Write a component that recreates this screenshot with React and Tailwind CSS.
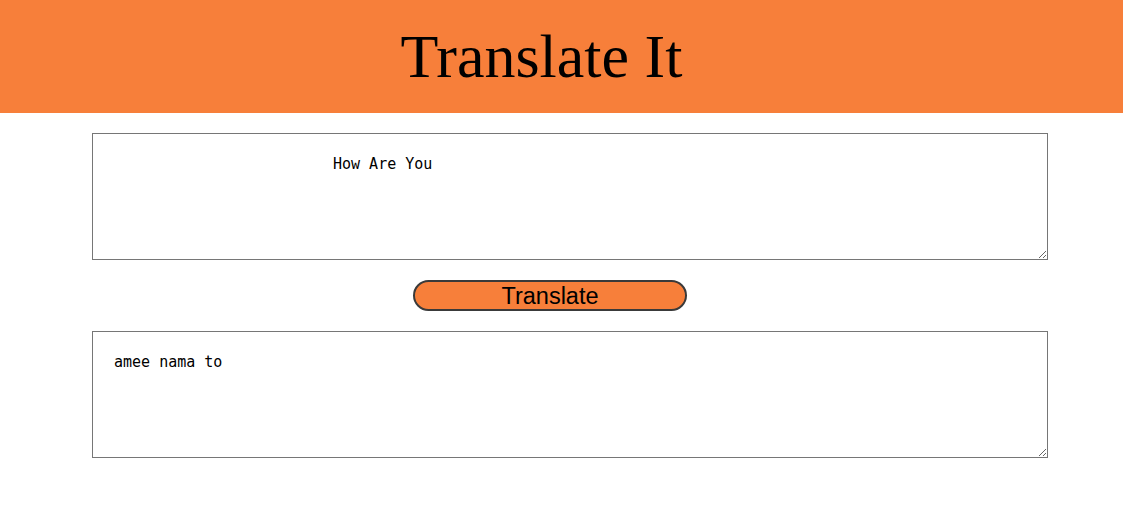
export default function App() {
  return (
    <div className="min-h-[507px] bg-white">
      {/* Header */}
      <div className="h-[113px] bg-[#f77f3a] flex items-center justify-center pr-[40px]">
        <h1 className="text-[62px] leading-none text-black font-['Liberation_Serif',serif] mt-[-2px]">Translate It</h1>
      </div>

      <div className="pt-[20px] pl-[92px] flex flex-col">
        <textarea
          readOnly
          defaultValue="How Are You"
          className="w-[956px] h-[127px] border border-[#767676] pt-[21px] pl-[240px] pr-[20px] text-[15px] leading-[18px] text-black font-['DejaVu_Sans_Mono',monospace] outline-none"
        />

        <div className="w-[956px] flex justify-center py-[20px] pr-[40px]">
          <button className="w-[274px] h-[31px] rounded-full border-2 border-[#3a3a3a] bg-[#f77f3a] pt-[3px] text-[23.5px] leading-none text-black font-['Liberation_Sans',sans-serif]">
            Translate
          </button>
        </div>

        <textarea
          readOnly
          defaultValue="amee nama to"
          className="w-[956px] h-[127px] border border-[#767676] pt-[21px] px-[21px] text-[15px] leading-[18px] text-black font-['DejaVu_Sans_Mono',monospace] outline-none"
        />
      </div>
    </div>
  );
}
